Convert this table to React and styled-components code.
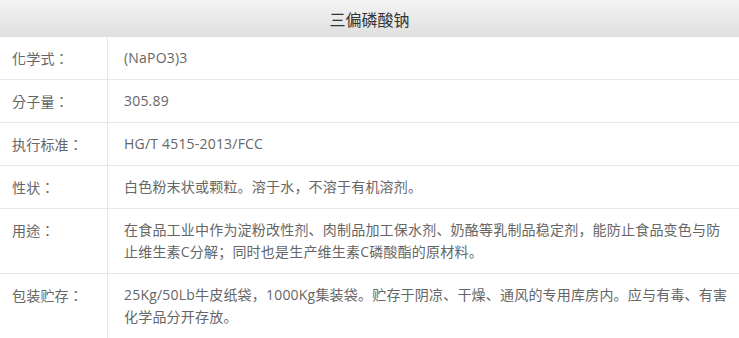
import styled, { createGlobalStyle } from "styled-components";

const GlobalStyle = createGlobalStyle`
  html, body {
    margin: 0;
    padding: 0;
    background: #fff;
  }
  body {
    font-family: "Open Sans", "Noto Sans CJK SC", sans-serif;
  }
`;

const Table = styled.div`
  width: 739px;
  display: flex;
  flex-direction: column;
`;

const Header = styled.div`
  height: 37px;
  display: flex;
  align-items: center;
  justify-content: center;
  background: linear-gradient(to bottom, #f4f4f4, #dfdfdf);
  color: #333;
  font-size: 16px;
  font-family: "Noto Sans CJK SC", sans-serif;
`;

const Row = styled.div`
  display: grid;
  grid-template-columns: 108px 1fr;
  border-bottom: 1px solid #e6e6e6;
  color: #666;
  font-size: 14px;
  line-height: 22px;
  letter-spacing: 0.2px;
`;

const Label = styled.div`
  padding: 10px 0 10px 12px;
  border-right: 1px solid #e6e6e6;
  font-family: "Noto Sans CJK TC", sans-serif;
`;

const Value = styled.div`
  padding: 10px 4px 10px 16px;
  white-space: pre-line;
`;

const specs = [
  { label: "化学式：", value: "(NaPO3)3" },
  { label: "分子量：", value: "305.89" },
  { label: "执行标准：", value: "HG/T 4515-2013/FCC" },
  { label: "性状：", value: "白色粉末状或颗粒。溶于水，不溶于有机溶剂。" },
  {
    label: "用途：",
    value:
      "在食品工业中作为淀粉改性剂、肉制品加工保水剂、奶酪等乳制品稳定剂，能防止食品变色与防\n止维生素C分解；同时也是生产维生素C磷酸酯的原材料。",
  },
  {
    label: "包装贮存：",
    value:
      "25Kg/50Lb牛皮纸袋，1000Kg集装袋。贮存于阴凉、干燥、通风的专用库房内。应与有毒、有害\n化学品分开存放。",
  },
];

export default function App() {
  return (
    <>
      <GlobalStyle />
      <Table>
        <Header>三偏磷酸钠</Header>
        {specs.map((s) => (
          <Row key={s.label}>
            <Label>{s.label}</Label>
            <Value>{s.value}</Value>
          </Row>
        ))}
      </Table>
    </>
  );
}
